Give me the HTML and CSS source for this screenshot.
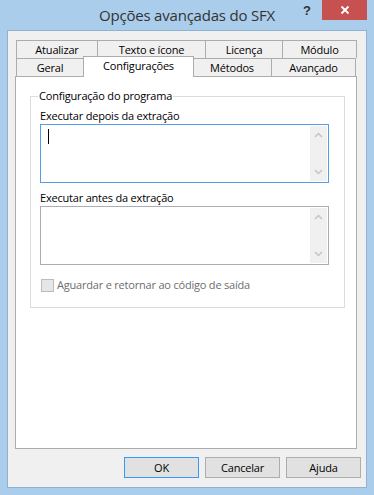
FILE: index.html
```html
<!DOCTYPE html>
<html lang="pt-BR">
<head>
    <meta charset="UTF-8">
    <title>Opções avançadas do SFX</title>
    <link rel="stylesheet" href="styles.css">
</head>
<body>
    <div class="window">
        <div class="titlebar">
            <div class="title">Opções avançadas do SFX</div>
            <div class="controls">
                <span class="help">?</span>
                <div class="close">
                    <svg width="10" height="10" viewBox="0 0 10 10">
                        <path d="M1.5 1.5 L8.5 8.5 M8.5 1.5 L1.5 8.5" stroke="#fff" stroke-width="1.8" fill="none"/>
                    </svg>
                </div>
            </div>
        </div>

        <div class="client">
            <!-- abas em duas linhas -->
            <div class="tabs">
                <div class="tab-row">
                    <div class="tab w-atualizar">Atualizar</div>
                    <div class="tab w-texto">Texto e ícone</div>
                    <div class="tab w-licenca">Licença</div>
                    <div class="tab w-modulo">Módulo</div>
                </div>
                <div class="tab-row">
                    <div class="tab w-geral">Geral</div>
                    <div class="tab selected w-config">Configurações</div>
                    <div class="tab w-metodos">Métodos</div>
                    <div class="tab w-avancado">Avançado</div>
                </div>
            </div>

            <div class="panel">
                <fieldset class="group">
                    <legend>Configuração do programa</legend>

                    <div class="field-label">Executar depois da extração</div>
                    <div class="edit focused">
                        <span class="caret"></span>
                        <div class="vscroll">
                            <svg width="9" height="6" viewBox="0 0 9 6"><path d="M1 5 L4.5 1.5 L8 5" stroke="#c4c4c4" stroke-width="1.5" fill="none"/></svg>
                            <svg width="9" height="6" viewBox="0 0 9 6"><path d="M1 1 L4.5 4.5 L8 1" stroke="#c4c4c4" stroke-width="1.5" fill="none"/></svg>
                        </div>
                    </div>

                    <div class="field-label second">Executar antes da extração</div>
                    <div class="edit">
                        <div class="vscroll">
                            <svg width="9" height="6" viewBox="0 0 9 6"><path d="M1 5 L4.5 1.5 L8 5" stroke="#c4c4c4" stroke-width="1.5" fill="none"/></svg>
                            <svg width="9" height="6" viewBox="0 0 9 6"><path d="M1 1 L4.5 4.5 L8 1" stroke="#c4c4c4" stroke-width="1.5" fill="none"/></svg>
                        </div>
                    </div>

                    <div class="check disabled">
                        <span class="box"></span>
                        <span>Aguardar e retornar ao código de saída</span>
                    </div>
                </fieldset>
            </div>

            <div class="buttons">
                <div class="btn default">OK</div>
                <div class="btn">Cancelar</div>
                <div class="btn">Ajuda</div>
            </div>
        </div>
    </div>
</body>
</html>
```

FILE: styles.css
```css
:root {
    --frame: #aacdec;
    --frame-line: #8fb2d1;
    --face: #f0f0f0;
    --tab-border: #acacac;
    --text: #000000;
}

body {
    margin: 0;
    font-family: 'Open Sans', 'Noto Sans', sans-serif;
    font-size: 11px;
    letter-spacing: -0.2px;
    color: var(--text);
}

.window {
    width: 374px;
    height: 495px;
    background: var(--frame);
    display: flex;
    flex-direction: column;
    box-sizing: border-box;
}

/* barra de título */
.titlebar {
    height: 30px;
    display: grid;
    grid-template-columns: 1fr auto 1fr;
    grid-template-areas: ". title controls";
}

.title {
    grid-area: title;
    font-size: 15px;
    color: #333333;
    line-height: 30px;
    letter-spacing: -0.2px;
}

.controls {
    grid-area: controls;
    justify-self: end;
    display: flex;
    align-items: flex-start;
    padding-right: 7px;
}

.help {
    font-family: 'Liberation Sans', sans-serif;
    font-weight: bold;
    font-size: 13px;
    letter-spacing: 0;
    color: #333333;
    margin-top: 3px;
    margin-right: 11px;
}

.close {
    width: 45px;
    height: 20px;
    background: #c75050;
    display: flex;
    align-items: center;
    justify-content: center;
}

/* área cliente */
.client {
    flex: 1;
    margin: 0 7px 7px 7px;
    border: 1px solid var(--frame-line);
    background: var(--face);
    display: flex;
    flex-direction: column;
}

.tabs {
    margin: 9px 0 0 8px;
}

.tab-row {
    display: flex;
    height: 18px;
}

.tab {
    box-sizing: border-box;
    height: 18px;
    border: 1px solid var(--tab-border);
    border-bottom: none;
    background: var(--face);
    text-align: center;
    line-height: 17px;
    margin-left: -1px;
    white-space: nowrap;
}

.tab:first-child {
    margin-left: 0;
}

.tab.selected {
    background: #ffffff;
    height: 21px;
    margin-top: -2px;
    margin-right: -1px;
    line-height: 17px;
    position: relative;
    z-index: 1;
}

.w-atualizar { width: 82px; }
.w-texto { width: 109px; }
.w-licenca { width: 78px; }
.w-modulo { width: 75px; }
.w-geral { width: 68px; }
.w-config { width: 111px; }
.w-metodos { width: 80px; }
.w-avancado { width: 85px; }

.panel {
    margin-left: 7px;
    width: 342px;
    height: 373px;
    box-sizing: border-box;
    border: 1px solid var(--tab-border);
    background: #ffffff;
}

/* grupo */
.group {
    margin: 11px 0 0 14px;
    width: 315px;
    height: 220px;
    box-sizing: border-box;
    border: 1px solid #dcdcdc;
    padding: 0 14px 0 9px;
}

.group legend {
    padding: 0 1px;
    margin-left: -2px;
    line-height: 16px;
}

.field-label {
    line-height: 16px;
    margin-top: 4px;
}

.field-label.second {
    margin-top: 7px;
}

.edit {
    width: 289px;
    height: 59px;
    box-sizing: border-box;
    border: 1px solid #abadb3;
    background: #ffffff;
    display: flex;
    justify-content: space-between;
    padding: 1px;
}

.edit.focused {
    border-color: #569de5;
}

.caret {
    width: 1px;
    height: 15px;
    background: #000000;
    margin: 3px 0 0 6px;
}

.vscroll {
    margin-left: auto;
    width: 17px;
    background: #f0f0f0;
    display: flex;
    flex-direction: column;
    align-items: center;
    justify-content: space-between;
    padding: 6px 0 6px;
    box-sizing: border-box;
}

.check {
    display: flex;
    align-items: center;
    gap: 3px;
    margin-top: 12px;
    line-height: 16px;
}

.check .box {
    width: 13px;
    height: 13px;
    box-sizing: border-box;
    border: 1px solid #bcbcbc;
    background: #e6e6e6;
    margin-left: 1px;
}

.check.disabled {
    color: #6d6d6d;
}

/* botões */
.buttons {
    display: flex;
    justify-content: flex-end;
    gap: 6px;
    margin-top: 8px;
    padding-right: 5px;
}

.btn {
    width: 75px;
    height: 21px;
    box-sizing: border-box;
    border: 1px solid #adadad;
    background: #e1e1e1;
    text-align: center;
    line-height: 19px;
}

.btn.default {
    border-color: #3399ff;
}
```
